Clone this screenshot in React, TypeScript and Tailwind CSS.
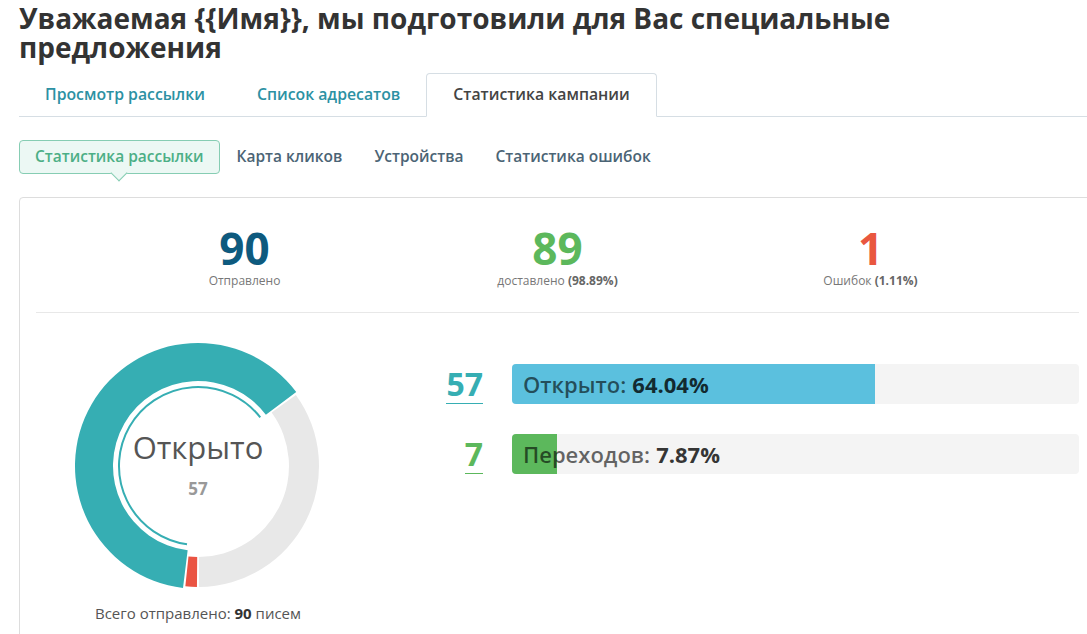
const font = { fontFamily: '"Open Sans", "Noto Sans", sans-serif' };

const title = "Уважаемая {{Имя}}, мы подготовили для Вас специальные предложения";

const mainTabs = [
  { label: "Просмотр рассылки", active: false },
  { label: "Список адресатов", active: false },
  { label: "Статистика кампании", active: true },
];

const subTabs = [
  { label: "Статистика рассылки", active: true },
  { label: "Карта кликов", active: false },
  { label: "Устройства", active: false },
  { label: "Статистика ошибок", active: false },
];

const stats = [
  { value: "90", color: "text-[#0e5a7e]", label: "Отправлено", extra: "" },
  { value: "89", color: "text-[#5cb85c]", label: "доставлено", extra: "(98.89%)" },
  { value: "1", color: "text-[#e9573f]", label: "Ошибок", extra: "(1.11%)" },
];

const bars = [
  { count: "57", countColor: "text-[#36aeb3]", line: "border-[#36aeb3]", fill: "bg-[#5bc0de]", pct: 64.04, label: "Открыто:", value: "64.04%" },
  { count: "7", countColor: "text-[#5cb85c]", line: "border-[#5cb85c]", fill: "bg-[#5cb85c]", pct: 7.87, label: "Переходов:", value: "7.87%" },
];

const C = 130;

function pt(r: number, deg: number) {
  const a = (deg * Math.PI) / 180;
  return [C + r * Math.sin(a), C - r * Math.cos(a)];
}

function sector(ro: number, ri: number, a0: number, a1: number) {
  const large = a1 - a0 > 180 ? 1 : 0;
  const [x0, y0] = pt(ro, a0);
  const [x1, y1] = pt(ro, a1);
  const [x2, y2] = pt(ri, a1);
  const [x3, y3] = pt(ri, a0);
  return `M${x0} ${y0} A${ro} ${ro} 0 ${large} 1 ${x1} ${y1} L${x2} ${y2} A${ri} ${ri} 0 ${large} 0 ${x3} ${y3} Z`;
}

function arc(r: number, a0: number, a1: number) {
  const large = a1 - a0 > 180 ? 1 : 0;
  const [x0, y0] = pt(r, a0);
  const [x1, y1] = pt(r, a1);
  return `M${x0} ${y0} A${r} ${r} 0 ${large} 1 ${x1} ${y1}`;
}

const Donut = () => (
  <div className="relative w-[260px] h-[260px]">
    <svg width="260" height="260" viewBox="0 0 260 260">
      <path d={sector(121, 91, 54, 179.5)} fill="#e8e8e8" />
      <path d={sector(121, 91, 180.5, 186)} fill="#ea5443" />
      <path d={sector(123, 85, 187, 413)} fill="#36aeb3" />
      <path d={arc(79, 188, 412)} fill="none" stroke="#36aeb3" strokeWidth="2" />
    </svg>
    <div className="absolute inset-0 flex flex-col items-center justify-center">
      <div className="text-[31px] leading-[36px] text-[#555] mt-[-2px]">Открыто</div>
      <div className="text-[17px] leading-[24px] font-bold text-[#999] mt-[12px]">57</div>
    </div>
  </div>
);

export default function App() {
  return (
    <div className="w-[1087px] h-[634px] overflow-hidden bg-white" style={font}>
      <div className="w-[1110px] pl-[19px]">
        <h1 className="text-[28px] leading-[29px] font-bold text-[#333] pt-[4px] w-[960px]">{title}</h1>

        <div className="mt-[11px] flex h-[44px] border-b border-[#d6dee4]">
          {mainTabs.map((t) => (
            <div
              key={t.label}
              className={
                t.active
                  ? "px-[26px] flex items-center text-[15.8px] font-semibold text-[#444] bg-white border border-[#d6dee4] border-b-white rounded-t-[4px] -mb-px"
                  : "px-[26px] flex items-center text-[15.8px] font-semibold text-[#2c91a3]"
              }
            >
              {t.label}
            </div>
          ))}
        </div>

        <div className="mt-[23px] flex gap-[2px] h-[34px]">
          {subTabs.map((t) => (
            <div
              key={t.label}
              className={
                t.active
                  ? "relative px-[15px] flex items-center text-[15.5px] font-semibold text-[#4caf86] bg-[#ecf8f4] border border-[#86cdb3] rounded-[4px]"
                  : "px-[15px] flex items-center text-[15.5px] font-semibold text-[#4b6475]"
              }
            >
              {t.label}
              {t.active && (
                <span className="absolute left-1/2 -translate-x-1/2 top-full w-[12px] h-[12px] -mt-[6px] rotate-45 bg-[#ecf8f4] border-r border-b border-[#86cdb3]" />
              )}
            </div>
          ))}
        </div>

        <div className="mt-[23px] w-[1077px] h-[460px] border border-[#dddddd] rounded-[4px] px-[16px]">
          <div className="grid grid-cols-[313px_313px_313px] justify-center pt-[27px] h-[115px] border-b border-[#e8e8e8]">
            {stats.map((s) => (
              <div key={s.value} className="flex flex-col items-center">
                <div className={`text-[44px] leading-[46px] font-bold ${s.color}`}>{s.value}</div>
                <div className="text-[12px] leading-[16px] text-[#777] mt-[2px]">
                  {s.extra ? `${s.label} ` : s.label}
                  {s.extra && <b className="font-bold text-[#666]">{s.extra}</b>}
                </div>
              </div>
            ))}
          </div>

          <div className="flex">
            <div className="w-[324px] flex flex-col items-center pt-[23px]">
              <Donut />
              <div className="text-[15px] leading-[20px] text-[#555] mt-[7px]">
                Всего отправлено: <b className="font-bold text-[#333]">90</b> писем
              </div>
            </div>

            <div className="flex-1 pt-[51px] flex flex-col gap-[30px]">
              {bars.map((b) => (
                <div key={b.count} className="flex items-center h-[40px]">
                  <div className="w-[123px] flex justify-end">
                    <span className={`text-[32px] leading-[38px] font-bold border-b ${b.line} ${b.countColor}`}>
                      {b.count}
                    </span>
                  </div>
                  <div className="ml-[29px] flex-1 relative h-[40px] bg-[#f4f4f4] rounded-[4px] overflow-hidden">
                    <div className={`absolute inset-y-0 left-0 ${b.fill}`} style={{ width: `${b.pct}%` }} />
                    <div className="relative h-full flex items-center pl-[11px] text-[22px] font-semibold">
                      <span className="text-black/60">{b.label}</span>
                      <span className="ml-[6px] font-bold text-black/80">{b.value}</span>
                    </div>
                  </div>
                </div>
              ))}
            </div>
          </div>
        </div>
      </div>
    </div>
  );
}
